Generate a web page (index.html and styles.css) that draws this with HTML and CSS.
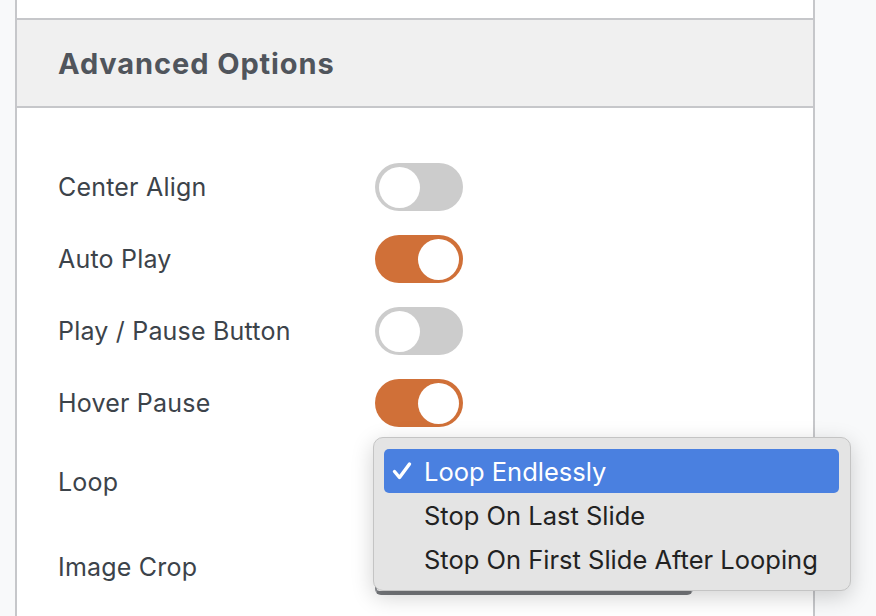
FILE: index.html
```html
<!DOCTYPE html>
<html>
<head>
<meta charset="utf-8">
<link rel="stylesheet" href="styles.css">
</head>
<body>
<div class="page">
  <div class="panel">
    <div class="panel-top"></div>
    <div class="panel-header"><h2>Advanced Options</h2></div>
    <div class="panel-body">
      <div class="row">
        <div class="label">Center Align</div>
        <div class="toggle"><span class="knob"></span></div>
      </div>
      <div class="row">
        <div class="label">Auto Play</div>
        <div class="toggle on"><span class="knob"></span></div>
      </div>
      <div class="row">
        <div class="label">Play / Pause Button</div>
        <div class="toggle"><span class="knob"></span></div>
      </div>
      <div class="row">
        <div class="label">Hover Pause</div>
        <div class="toggle on"><span class="knob"></span></div>
      </div>
      <div class="row row-select">
        <div class="label">Loop</div>
        <div class="select-wrap">
          <div class="select focused">Loop Endlessly</div>
          <div class="popup">
            <div class="opt selected"><svg class="check" width="20" height="20" viewBox="0 0 20 20"><path d="M2.5 10.5 L7.5 16.5 L17.5 3" fill="none" stroke="#fff" stroke-width="3.4" stroke-linecap="round" stroke-linejoin="round"/></svg>Loop Endlessly</div>
            <div class="opt">Stop On Last Slide</div>
            <div class="opt">Stop On First Slide After Looping</div>
          </div>
        </div>
      </div>
      <div class="row row-select row-last">
        <div class="label">Image Crop</div>
        <div class="select-wrap">
          <div class="select">Center</div>
        </div>
      </div>
    </div>
  </div>
</div>
</body>
</html>
```
FILE: styles.css
```css
html, body {
  margin: 0;
  padding: 0;
  background: #f8f9fa;
  height: 616px;
  overflow: hidden;
}
.page {
  padding-left: 15px;
  font-family: Inter, "Noto Sans", sans-serif;
}
.panel {
  width: 796px;
  border-left: 2px solid #c6c7ca;
  border-right: 2px solid #c6c7ca;
  background: #fff;
  height: 640px;
}
.panel-top {
  height: 18px;
  background: #fff;
}
.panel-header {
  height: 86px;
  background: #f0f0f0;
  border-top: 2px solid #c6c7ca;
  border-bottom: 2px solid #c6c7ca;
  display: flex;
  align-items: center;
  padding-left: 41px;
}
.panel-header h2 {
  margin: 0;
  font-size: 29px;
  font-weight: 700;
  color: #50555c;
  letter-spacing: 0.9px;
}
.panel-body {
  padding: 55px 0 0 41px;
  display: flex;
  flex-direction: column;
  gap: 24px;
}
.row {
  display: flex;
  align-items: center;
  height: 48px;
}
.row-select {
  height: 56px;
  margin-top: 3px;
}
.row-last {
  margin-top: 5px;
}
.label {
  width: 317px;
  font-size: 25px;
  letter-spacing: 0.2px;
  color: #3c434a;
}
.toggle {
  width: 88px;
  height: 48px;
  border-radius: 24px;
  background: #cccccc;
  display: flex;
  align-items: center;
  padding: 0 4px;
  box-sizing: border-box;
}
.toggle .knob {
  width: 41px;
  height: 41px;
  border-radius: 50%;
  background: #fff;
}
.toggle.on {
  background: #d07038;
  justify-content: flex-end;
}
.select-wrap {
  position: relative;
}
.select {
  width: 318px;
  height: 56px;
  box-sizing: border-box;
  border: 2px solid #8c8f94;
  border-bottom: 4px solid #77797d;
  border-radius: 6px;
  font-size: 22px;
  color: #2c3338;
  display: flex;
  align-items: center;
  padding-left: 14px;
  background: #fff;
}
.select.focused {
  border-color: #1d4f80;
}
.popup {
  position: absolute;
  z-index: 10;
  left: -2px;
  top: -17px;
  width: 478px;
  height: 154px;
  box-sizing: border-box;
  background: #e4e4e4;
  border: 1px solid #c4c4c4;
  border-radius: 10px;
  box-shadow: 0 6px 22px rgba(0, 0, 0, 0.18);
  padding: 11px 11px 0 10px;
  font-family: Inter, "Noto Sans", sans-serif;
}
.opt {
  height: 44px;
  display: flex;
  align-items: center;
  padding-left: 40px;
  font-size: 25.5px;
  color: #222;
  border-radius: 5px;
  position: relative;
}
.opt.selected {
  background: #4a80e0;
  color: #fff;
}
.check {
  position: absolute;
  left: 8px;
  top: 12px;
}
```
